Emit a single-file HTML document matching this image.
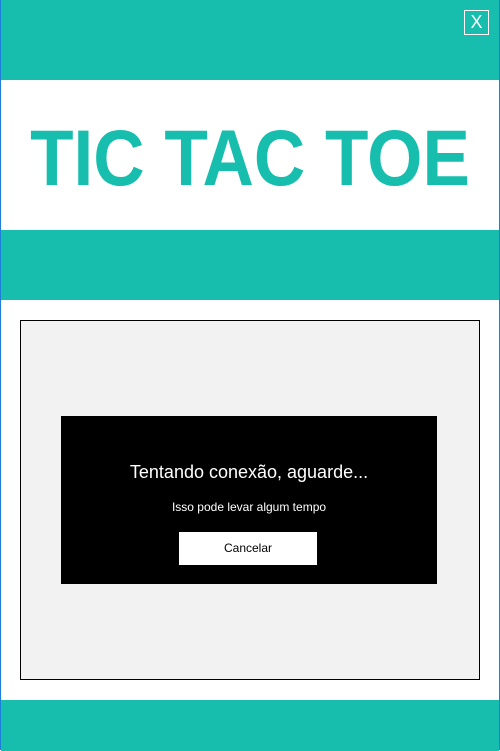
<!DOCTYPE html>
<html><head><meta charset="utf-8"><style>
*{margin:0;padding:0;box-sizing:border-box}
html,body{width:500px;height:750px;overflow:hidden;background:#fff;font-family:"Liberation Sans",sans-serif}
.win{position:absolute;left:0;top:0;width:500px;height:750px;border:1px solid #1e7fd8;}
.band{position:absolute;left:0;right:0;background:#17bead}
.close{position:absolute;left:463px;top:9px;width:25px;height:25px;border:1px solid #fff;color:#fff;font-size:18px;line-height:23px;text-align:center}
.title{position:absolute;left:0;width:498px;top:111px;text-align:center;color:#17bead;font-weight:bold;font-size:79px;line-height:92px;transform:scaleX(0.9)}
.gray{position:absolute;left:19px;top:319px;width:460px;height:360px;background:#f2f2f2;border:1px solid #000}
.black{position:absolute;left:60px;top:415px;width:376px;height:168px;background:#000;color:#fff;text-align:center}
.h{position:absolute;top:46px;width:100%;font-size:18px}
.s{position:absolute;top:84px;width:100%;font-size:12px}
.btn{position:absolute;left:118px;top:116px;width:138px;height:33px;background:#fff;color:#000;font-size:12px;line-height:33px}
</style></head><body>
<div class="win">
<div class="band" style="top:-1px;height:80px"></div>
<div class="band" style="top:229px;height:70px"></div>
<div class="band" style="top:699px;height:51px"></div>
<div class="close">X</div>
<div class="title">TIC TAC TOE</div>
<div class="gray"></div>
<div class="black">
<div class="h">Tentando conexão, aguarde...</div>
<div class="s">Isso pode levar algum tempo</div>
<div class="btn">Cancelar</div>
</div>
</div>
</body></html>
